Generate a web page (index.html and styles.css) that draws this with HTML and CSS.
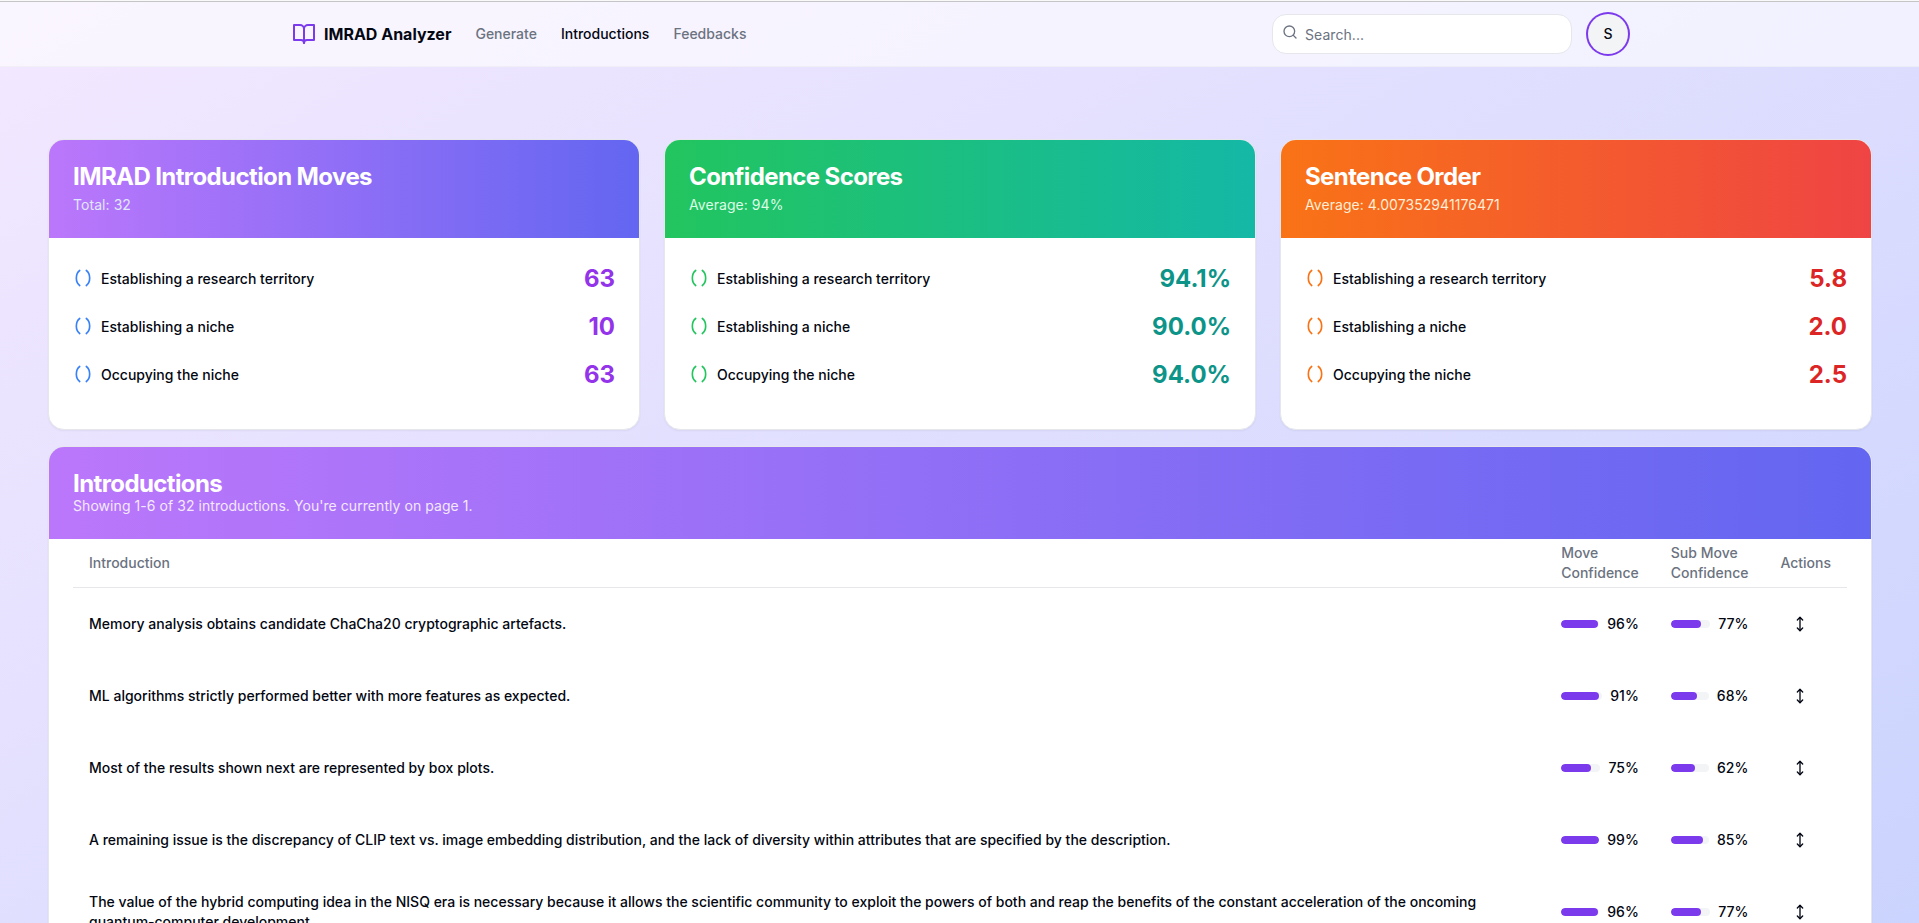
FILE: index.html
```html
<!DOCTYPE html>
<html lang="en">
<head>
<meta charset="utf-8">
<title>IMRAD Analyzer</title>
<link rel="stylesheet" href="styles.css">
</head>
<body>
<svg class="sprite" aria-hidden="true">
  <symbol id="parens" viewBox="0 0 24 24"><path d="M8 21s-4-3-4-9 4-9 4-9"/><path d="M16 3s4 3 4 9-4 9-4 9"/></symbol>
  <symbol id="move-vertical" viewBox="0 0 24 24"><path d="M12 2v20"/><path d="m8 18 4 4 4-4"/><path d="m8 6 4-4 4 4"/></symbol>
</svg>
<div class="viewport">
<div class="page">
  <header class="topbar">
    <div class="topbar-inner">
      <a class="brand"><svg class="icon icon-lg" viewBox="0 0 24 24"><path d="M2 3h6a4 4 0 0 1 4 4v14a3 3 0 0 0-3-3H2z"/><path d="M22 3h-6a4 4 0 0 0-4 4v14a3 3 0 0 1 3-3h7z"/></svg><span>IMRAD Analyzer</span></a>
      <nav class="nav"><a>Generate</a><a class="active">Introductions</a><a>Feedbacks</a></nav>
      <div class="tools">
        <div class="search"><svg class="icon search-icon" viewBox="0 0 24 24"><circle cx="11" cy="11" r="8"/><path d="m21 21-4.3-4.3"/></svg><input class="search-input" type="search" placeholder="Search..."></div>
        <div class="avatar">S</div>
      </div>
    </div>
  </header>
  <main class="content">
    <section class="stats">
      <article class="card moves">
        <div class="card-head"><h3>IMRAD Introduction Moves</h3><p>Total: 32</p></div>
        <div class="card-body">
          <div class="stat"><svg class="icon stat-icon"><use href="#parens"/></svg><span class="stat-label">Establishing a research territory</span><span class="stat-value">63</span></div>
          <div class="stat"><svg class="icon stat-icon"><use href="#parens"/></svg><span class="stat-label">Establishing a niche</span><span class="stat-value">10</span></div>
          <div class="stat"><svg class="icon stat-icon"><use href="#parens"/></svg><span class="stat-label">Occupying the niche</span><span class="stat-value">63</span></div>
        </div>
      </article>
      <article class="card scores">
        <div class="card-head"><h3>Confidence Scores</h3><p>Average: 94%</p></div>
        <div class="card-body">
          <div class="stat"><svg class="icon stat-icon"><use href="#parens"/></svg><span class="stat-label">Establishing a research territory</span><span class="stat-value">94.1%</span></div>
          <div class="stat"><svg class="icon stat-icon"><use href="#parens"/></svg><span class="stat-label">Establishing a niche</span><span class="stat-value">90.0%</span></div>
          <div class="stat"><svg class="icon stat-icon"><use href="#parens"/></svg><span class="stat-label">Occupying the niche</span><span class="stat-value">94.0%</span></div>
        </div>
      </article>
      <article class="card order">
        <div class="card-head"><h3>Sentence Order</h3><p>Average: 4.007352941176471</p></div>
        <div class="card-body">
          <div class="stat"><svg class="icon stat-icon"><use href="#parens"/></svg><span class="stat-label">Establishing a research territory</span><span class="stat-value">5.8</span></div>
          <div class="stat"><svg class="icon stat-icon"><use href="#parens"/></svg><span class="stat-label">Establishing a niche</span><span class="stat-value">2.0</span></div>
          <div class="stat"><svg class="icon stat-icon"><use href="#parens"/></svg><span class="stat-label">Occupying the niche</span><span class="stat-value">2.5</span></div>
        </div>
      </article>
    </section>
    <section class="card list">
      <div class="card-head"><h3>Introductions</h3><p>Showing 1-6 of 32 introductions. You're currently on page 1.</p></div>
      <div class="table-wrap">
        <table class="table">
          <colgroup><col><col class="col-score"><col class="col-score"><col class="col-actions"></colgroup>
          <thead><tr><th>Introduction</th><th>Move Confidence</th><th>Sub Move Confidence</th><th>Actions</th></tr></thead>
          <tbody>
            <tr><td>Memory analysis obtains candidate ChaCha20 cryptographic artefacts.</td>
              <td><div class="score"><div class="track"><div class="fill" style="width:96%"></div></div><span>96%</span></div></td>
              <td><div class="score"><div class="track"><div class="fill" style="width:77%"></div></div><span>77%</span></div></td>
              <td><button class="icon-button"><svg class="icon"><use href="#move-vertical"/></svg></button></td></tr>
            <tr><td>ML algorithms strictly performed better with more features as expected.</td>
              <td><div class="score"><div class="track"><div class="fill" style="width:91%"></div></div><span>91%</span></div></td>
              <td><div class="score"><div class="track"><div class="fill" style="width:68%"></div></div><span>68%</span></div></td>
              <td><button class="icon-button"><svg class="icon"><use href="#move-vertical"/></svg></button></td></tr>
            <tr><td>Most of the results shown next are represented by box plots.</td>
              <td><div class="score"><div class="track"><div class="fill" style="width:75%"></div></div><span>75%</span></div></td>
              <td><div class="score"><div class="track"><div class="fill" style="width:62%"></div></div><span>62%</span></div></td>
              <td><button class="icon-button"><svg class="icon"><use href="#move-vertical"/></svg></button></td></tr>
            <tr><td>A remaining issue is the discrepancy of CLIP text vs. image embedding distribution, and the lack of diversity within attributes that are specified by the description.</td>
              <td><div class="score"><div class="track"><div class="fill" style="width:99%"></div></div><span>99%</span></div></td>
              <td><div class="score"><div class="track"><div class="fill" style="width:85%"></div></div><span>85%</span></div></td>
              <td><button class="icon-button"><svg class="icon"><use href="#move-vertical"/></svg></button></td></tr>
            <tr><td>The value of the hybrid computing idea in the NISQ era is necessary because it allows the scientific community to exploit the powers of both and reap the benefits of the constant acceleration of the oncoming quantum-computer development.</td>
              <td><div class="score"><div class="track"><div class="fill" style="width:96%"></div></div><span>96%</span></div></td>
              <td><div class="score"><div class="track"><div class="fill" style="width:77%"></div></div><span>77%</span></div></td>
              <td><button class="icon-button"><svg class="icon"><use href="#move-vertical"/></svg></button></td></tr>
          </tbody>
        </table>
      </div>
    </section>
  </main>
</div>
</div>
</body>
</html>
```
FILE: styles.css
```css
* { box-sizing: border-box; margin: 0; padding: 0; }
body {
  font: 14px/20px Inter, sans-serif;
  color: #030712;
  background: #f9f9fa;
}
.sprite { display: none; }
.viewport { height: 923px; padding-top: 1px; overflow: hidden; }
.page {
  width: 1920px;
  height: 1140px;
  border-top: 1px solid #c5c5c8;
  background: linear-gradient(to bottom right, #f3e8ff, #c7d2fe);
}
.icon {
  width: 16px;
  height: 16px;
  flex: none;
  fill: none;
  stroke: currentColor;
  stroke-width: 2;
  stroke-linecap: round;
  stroke-linejoin: round;
}
.icon-lg { width: 24px; height: 24px; color: #7c3aed; }

.topbar {
  height: 65px;
  border-bottom: 1px solid rgba(229, 231, 235, .4);
  background: rgba(255, 255, 255, .6);
}
.topbar-inner {
  display: flex;
  align-items: center;
  height: 64px;
  max-width: 1400px;
  margin: 0 auto;
  padding: 0 32px;
}
.brand {
  display: flex;
  align-items: center;
  gap: 8px;
  margin-right: 24px;
  font-size: 16px;
  line-height: 24px;
  font-weight: 700;
}
.nav { display: flex; gap: 24px; font-weight: 500; color: #6b7280; }
.nav .active { color: #030712; }
.tools { display: flex; align-items: center; gap: 16px; margin-left: auto; }
.search { position: relative; display: flex; }
.search-icon { position: absolute; left: 10px; top: 10px; color: #6b7280; }
.search-input {
  width: 300px;
  height: 40px;
  padding: 8px 12px 8px 32px;
  border: 1px solid #e5e7eb;
  border-radius: 14px;
  background: #fff;
  font: 14px/20px Inter, sans-serif;
  letter-spacing: .06px;
}
.search-input::placeholder { color: #6b7280; }
.avatar {
  display: grid;
  place-items: center;
  width: 40px;
  height: 40px;
  border-radius: 50%;
  background: #f3f4f6;
  box-shadow: 0 0 0 2px #7c3aed;
  font-weight: 500;
}

.content { padding: 72px 48px 0; }
.stats { display: grid; grid-template-columns: repeat(3, 1fr); gap: 24px; margin-bottom: 16px; }
.card {
  overflow: hidden;
  border: 1px solid #e5e7eb;
  border-radius: 16px;
  background: #fff;
  box-shadow: 0 1px 2px rgba(0, 0, 0, .05);
}
.card-head { padding: 25px 24px 23px; color: #fff; }
.card-head h3 { font-size: 24px; line-height: 24px; font-weight: 700; letter-spacing: -.6px; }
.card-head p { letter-spacing: .06px; }
.stats .card-head p { margin-top: 6px; }
.moves .card-head, .list .card-head { background: linear-gradient(to right, #bb77fb, #6366f1); }
.scores .card-head { background: linear-gradient(to right, #22c55e, #14b8a6); }
.order .card-head { background: linear-gradient(to right, #f97316, #ef4444); }
.moves .card-head p { color: #e0e7ff; }
.scores .card-head p { color: #dcfce7; }
.order .card-head p { color: #ffedd5; }
.list .card-head p { color: #f3e8ff; }
.card-body { padding: 24px 24px 23px; }
.stat { display: flex; align-items: center; margin-bottom: 16px; }
.stat-icon { width: 20px; height: 20px; margin-right: 8px; }
.stat-label { padding-top: 2px; font-weight: 500; }
.stat-value { margin-left: auto; padding-top: 2px; font-size: 24px; line-height: 30px; font-weight: 700; }
.moves .stat-icon { color: #3b82f6; }
.scores .stat-icon { color: #22c55e; }
.order .stat-icon { color: #f97316; }
.moves .stat-value { color: #9333ea; }
.scores .stat-value { color: #0d9488; }
.order .stat-value { color: #dc2626; }

.table-wrap { padding: 0 24px 24px; }
.table { width: 100%; table-layout: fixed; border-collapse: collapse; }
.col-score { width: 109.6px; }
.col-actions { width: 82.6px; }
.table th {
  height: 48px;
  padding: 0 16px;
  text-align: left;
  vertical-align: middle;
  font-weight: 500;
  color: #6b7280;
}
.table thead tr { border-bottom: 1px solid #e5e7eb; }
.table td { height: 72px; padding: 16px; vertical-align: middle; font-weight: 500; }
.score { display: flex; align-items: center; gap: 8px; }
.track { flex: 1; height: 8px; overflow: hidden; border-radius: 4px; background: #f3f4f6; }
.fill { height: 8px; border-radius: 4px; background: #7c3aed; }
.icon-button {
  display: grid;
  place-items: center;
  width: 40px;
  height: 40px;
  border: 0;
  background: none;
  color: inherit;
}
```
